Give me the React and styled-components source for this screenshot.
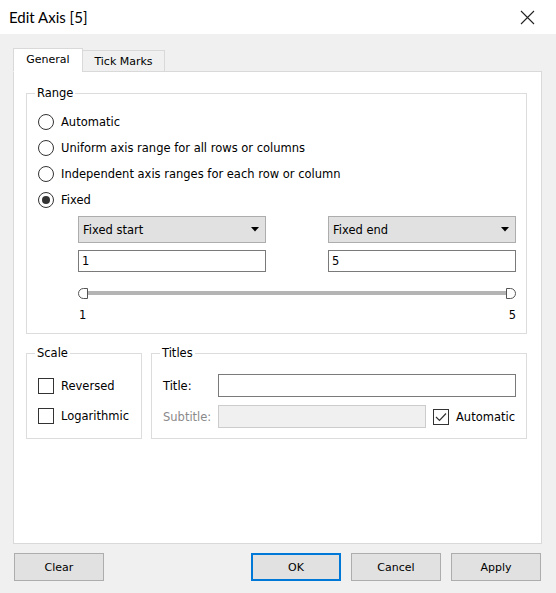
import React from 'react';
import styled, { createGlobalStyle } from 'styled-components';

const GlobalStyle = createGlobalStyle`
  html, body {
    margin: 0;
    padding: 0;
    background: #f0f0f0;
  }
  * {
    box-sizing: border-box;
  }
`;

const Window = styled.div`
  width: 556px;
  height: 593px;
  display: flex;
  flex-direction: column;
  background: #f0f0f0;
  font-family: "DejaVu Sans", Verdana, sans-serif;
  font-size: 11.5px;
  color: #000;
`;

const TitleBar = styled.div`
  height: 34px;
  background: #fff;
  display: flex;
  align-items: center;
  justify-content: space-between;
  padding: 0 35px 0 9px;
  font-family: Lato, "Segoe UI", sans-serif;
  font-size: 15px;
`;

const CloseButton = styled.div`
  width: 16px;
  height: 16px;
  display: flex;
  align-items: center;
  justify-content: center;
  margin-right: -14px;
`;

const Body = styled.div`
  flex: 1;
  display: flex;
  flex-direction: column;
  padding: 14px 14px 0 13px;
`;

const TabRow = styled.div`
  display: flex;
  align-items: flex-end;
  height: 24px;
  position: relative;
  z-index: 1;
`;

const Tab = styled.div`
  width: ${(p) => p.w}px;
  height: ${(p) => (p.active ? '24px' : '22px')};
  display: flex;
  align-items: center;
  justify-content: center;
  font-size: 11px;
  background: ${(p) => (p.active ? '#fff' : '#f0f0f0')};
  border: 1px solid #d9d9d9;
  border-bottom: ${(p) => (p.active ? '1px solid #fff' : '1px solid #d9d9d9')};
  margin-left: ${(p) => (p.active ? '0' : '-1px')};
  padding-bottom: ${(p) => (p.active ? '2px' : '0')};
`;

const Panel = styled.div`
  height: 473px;
  margin-top: -1px;
  background: #fff;
  border: 1px solid #d9d9d9;
  padding: 14px 14px 0 12px;
  display: flex;
  flex-direction: column;
`;

const Group = styled.fieldset`
  margin: 0;
  border: 1px solid #dcdcdc;
  padding: 0 10px 0 11px;
  min-width: 0;
  width: ${(p) => p.width || 'auto'};
  height: ${(p) => p.height || 'auto'};
`;

const Legend = styled.legend`
  padding: 0 2px;
  margin-left: -3px;
  line-height: 14px;
`;

const RadioList = styled.div`
  display: flex;
  flex-direction: column;
  padding-top: 9px;
`;

const RadioRow = styled.div`
  height: 26px;
  display: flex;
  align-items: center;
  gap: 7px;
`;

const RadioCircle = styled.span`
  width: 16px;
  height: 16px;
  border-radius: 50%;
  border: 1px solid #333;
  background: #fff;
  display: flex;
  align-items: center;
  justify-content: center;
  &::after {
    content: '';
    display: ${(p) => (p.checked ? 'block' : 'none')};
    width: 8px;
    height: 8px;
    border-radius: 50%;
    background: #333;
  }
`;

const FixedBlock = styled.div`
  margin: 3px 0 0 40px;
  width: 438px;
  display: grid;
  grid-template-columns: 188px 188px;
  column-gap: 62px;
  row-gap: 7px;
`;

const Dropdown = styled.div`
  height: 27px;
  background: #e1e1e1;
  border: 1px solid #adadad;
  display: flex;
  align-items: center;
  justify-content: space-between;
  padding: 0 6px 0 4px;
`;

const TextBox = styled.div`
  height: ${(p) => p.h || 22}px;
  grid-column: ${(p) => p.span || 'auto'};
  background: ${(p) => (p.disabled ? '#f0f0f0' : '#fff')};
  border: 1px solid ${(p) => (p.disabled ? '#cccccc' : '#7a7a7a')};
  display: flex;
  align-items: center;
  padding: 0 3px;
`;

const Slider = styled.div`
  grid-column: 1 / 3;
  margin-top: 9px;
  display: flex;
  align-items: center;
  height: 10px;
`;

const Track = styled.div`
  flex: 1;
  height: 4px;
  background: #b4b4b4;
`;

const SliderLabels = styled.div`
  grid-column: 1 / 3;
  display: flex;
  justify-content: space-between;
  padding: 3px 0 0 1px;
  height: 28px;
`;

const BottomRow = styled.div`
  display: flex;
  gap: 9px;
  margin-top: 12px;
`;

const CheckList = styled.div`
  padding-top: 11px;
`;

const CheckRow = styled.div`
  height: 30px;
  display: flex;
  align-items: center;
  gap: 7px;
`;

const CheckBox = styled.span`
  width: 16px;
  height: 16px;
  border: 1px solid #333;
  background: #fff;
  display: flex;
  align-items: center;
  justify-content: center;
`;

const TitlesGrid = styled.div`
  display: grid;
  grid-template-columns: 55px 208px auto;
  row-gap: 8px;
  align-items: center;
  padding-top: 14px;
`;

const FieldLabel = styled.span`
  color: ${(p) => (p.disabled ? '#8a8a8a' : '#000')};
`;

const AutoCheck = styled.div`
  display: flex;
  align-items: center;
  gap: 7px;
  padding-left: 7px;
`;

const Footer = styled.div`
  display: flex;
  justify-content: space-between;
  padding: 9px 1px 0 1px;
`;

const ButtonGroup = styled.div`
  display: flex;
  gap: 10px;
`;

const Button = styled.div`
  width: 90px;
  height: 28px;
  display: flex;
  align-items: center;
  justify-content: center;
  font-size: 11px;
  background: #e1e1e1;
  border: ${(p) => (p.primary ? '2px solid #0078d7' : '1px solid #adadad')};
`;

function Arrow() {
  return (
    <svg width="8" height="5" viewBox="0 0 8 5">
      <path d="M0 0 H8 L4 4.5 Z" fill="#000" />
    </svg>
  );
}

function Handle({ flip }) {
  return (
    <svg width="10" height="11" viewBox="0 0 10 11" style={{ transform: flip ? 'scaleX(-1)' : 'none' }}>
      <path d="M9.5 0.5 H5.5 A5 5 0 0 0 5.5 10.5 H9.5 Z" fill="#fff" stroke="#555" strokeWidth="1" />
    </svg>
  );
}

function Tick() {
  return (
    <svg width="12" height="10" viewBox="0 0 12 10">
      <path d="M1 5 L4.5 8.5 L11 1.5" fill="none" stroke="#333" strokeWidth="1.2" />
    </svg>
  );
}

const rangeOptions = [
  { label: 'Automatic' },
  { label: 'Uniform axis range for all rows or columns' },
  { label: 'Independent axis ranges for each row or column' },
  { label: 'Fixed', checked: true },
];

export default function App() {
  return (
    <Window>
      <GlobalStyle />
      <TitleBar>
        <span>Edit Axis [5]</span>
        <CloseButton>
          <svg width="15" height="15" viewBox="0 0 15 15">
            <path d="M1 1 L14 14 M14 1 L1 14" stroke="#222" strokeWidth="1.1" />
          </svg>
        </CloseButton>
      </TitleBar>
      <Body>
        <TabRow>
          <Tab active w={70}>General</Tab>
          <Tab w={83}>Tick Marks</Tab>
        </TabRow>
        <Panel>
          <Group height="248px">
            <Legend>Range</Legend>
            <RadioList>
              {rangeOptions.map((o) => (
                <RadioRow key={o.label}>
                  <RadioCircle checked={o.checked} />
                  <span>{o.label}</span>
                </RadioRow>
              ))}
            </RadioList>
            <FixedBlock>
              <Dropdown>
                <span>Fixed start</span>
                <Arrow />
              </Dropdown>
              <Dropdown>
                <span>Fixed end</span>
                <Arrow />
              </Dropdown>
              <TextBox>1</TextBox>
              <TextBox>5</TextBox>
              <Slider>
                <Handle />
                <Track />
                <Handle flip />
              </Slider>
              <SliderLabels>
                <span>1</span>
                <span>5</span>
              </SliderLabels>
            </FixedBlock>
          </Group>
          <BottomRow>
            <Group width="116px" height="93px">
              <Legend>Scale</Legend>
              <CheckList>
                <CheckRow>
                  <CheckBox />
                  <span>Reversed</span>
                </CheckRow>
                <CheckRow>
                  <CheckBox />
                  <span>Logarithmic</span>
                </CheckRow>
              </CheckList>
            </Group>
            <Group width="376px" height="93px">
              <Legend>Titles</Legend>
              <TitlesGrid>
                <FieldLabel>Title:</FieldLabel>
                <TextBox span="2 / 4" h={23} />
                <FieldLabel disabled>Subtitle:</FieldLabel>
                <TextBox disabled h={23} />
                <AutoCheck>
                  <CheckBox>
                    <Tick />
                  </CheckBox>
                  <span>Automatic</span>
                </AutoCheck>
              </TitlesGrid>
            </Group>
          </BottomRow>
        </Panel>
        <Footer>
          <Button>Clear</Button>
          <ButtonGroup>
            <Button primary>OK</Button>
            <Button>Cancel</Button>
            <Button>Apply</Button>
          </ButtonGroup>
        </Footer>
      </Body>
    </Window>
  );
}
